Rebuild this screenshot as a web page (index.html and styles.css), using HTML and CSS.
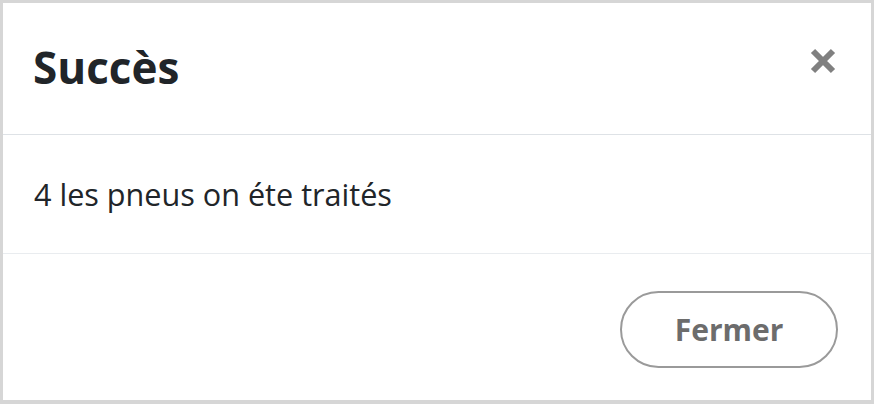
FILE: index.html
```html
<!DOCTYPE html>
<html lang="fr">
<head>
<meta charset="utf-8">
<title>Succès</title>
<link rel="stylesheet" href="styles.css">
</head>
<body>
<div class="modal">
  <div class="modal-header">
    <h5 class="modal-title">Succès</h5>
    <button class="close" type="button" aria-label="Close">
      <svg width="26" height="26" viewBox="0 0 26 26" aria-hidden="true">
        <path d="M3 3 L23 23 M23 3 L3 23" stroke="#808080" stroke-width="6" fill="none"/>
      </svg>
    </button>
  </div>
  <div class="modal-body">
    <p class="message">4 les pneus on éte traités</p>
  </div>
  <div class="modal-footer">
    <button class="btn-close" type="button">Fermer</button>
  </div>
</div>
</body>
</html>
```
FILE: styles.css
```css
html, body {
  margin: 0;
  padding: 0;
  background: #ffffff;
}
.modal {
  box-sizing: border-box;
  width: 874px;
  height: 404px;
  border: 3px solid #d6d6d6;
  border-bottom-width: 4px;
  background: #ffffff;
  display: flex;
  flex-direction: column;
  font-family: "Open Sans", "Noto Sans", sans-serif;
  color: #212529;
}
.modal-header {
  height: 131px;
  border-bottom: 1px solid #dee2e6;
  display: flex;
  align-items: center;
  justify-content: space-between;
  padding: 0 35px 0 30px;
}
.modal-title {
  margin: 0;
  font-size: 44px;
  font-weight: 700;
  line-height: 1.2;
  margin-top: -2px;
}
.close {
  border: 0;
  background: transparent;
  padding: 0;
  margin: -15px 0 0 0;
  width: 26px;
  height: 26px;
  display: flex;
}
.modal-body {
  height: 118px;
  display: flex;
  align-items: center;
  padding: 0 31px;
}
.message {
  margin: 0;
  font-size: 30.6px;
  line-height: 1.5;
  margin-top: 2px;
}
.modal-footer {
  flex: 1;
  border-top: 1px solid #e9ecef;
  display: flex;
  justify-content: flex-end;
  align-items: flex-start;
  padding: 37px 33px 0 0;
}
.btn-close {
  box-sizing: border-box;
  width: 218px;
  height: 77px;
  border: 2px solid #9a9a9a;
  border-radius: 40px;
  background: #ffffff;
  color: #6c6c6c;
  font-family: "Open Sans", "Noto Sans", sans-serif;
  font-size: 30px;
  font-weight: 700;
  padding: 0;
}
```
